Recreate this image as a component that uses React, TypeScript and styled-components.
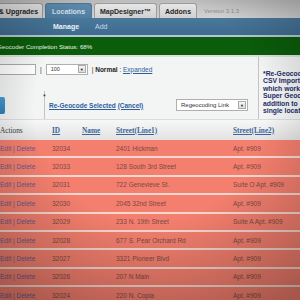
import React from "react";
import styled, { createGlobalStyle } from "styled-components";

const GlobalStyle = createGlobalStyle`
  body {
    margin: 0;
    background: #eef0f0;
    font-family: "Liberation Sans", Arial, sans-serif;
    overflow: hidden;
  }
`;

const Page = styled.div`
  position: relative;
  width: 300px;
  height: 300px;
  overflow: hidden;
  background: #f0f1f1;
  &::after {
    content: "";
    position: absolute;
    inset: 0;
    pointer-events: none;
    background: radial-gradient(
      ellipse 80% 78% at 50% 36%,
      rgba(0, 0, 0, 0) 48%,
      rgba(0, 0, 0, 0.32) 100%
    );
  }
`;

const TabBar = styled.div`
  height: 18px;
  display: flex;
  align-items: flex-end;
  gap: 2px;
  background: linear-gradient(#bcbcbc, #d2d2d2);
`;

const Tab = styled.div<{ $active?: boolean; $w: number }>`
  width: ${(p) => p.$w}px;
  height: 15px;
  box-sizing: border-box;
  display: flex;
  align-items: center;
  justify-content: center;
  border: 1px solid ${(p) => (p.$active ? "#4b7798" : "#9c9c9c")};
  border-bottom: none;
  border-radius: 3px 3px 0 0;
  background: ${(p) =>
    p.$active
      ? "linear-gradient(#5f8cae, #4f7ea2)"
      : "linear-gradient(#e6e6e6, #d0d0d0)"};
  color: ${(p) => (p.$active ? "#d6e2ec" : "#262626")};
  font-size: 7px;
  font-weight: bold;
  white-space: nowrap;
  &:first-child {
    margin-left: -6px;
  }
`;

const Version = styled.span`
  align-self: center;
  margin: 3px 0 0 5px;
  font-size: 6px;
  color: #8c8c8c;
`;

const SubNav = styled.div`
  height: 17px;
  display: flex;
  align-items: center;
  gap: 16px;
  padding-left: 53px;
  background: linear-gradient(#4a789b, #3e6b8f);
  border-bottom: 2px solid #b4c6d2;
`;

const SubLink = styled.span<{ $current?: boolean }>`
  font-size: 7px;
  font-weight: ${(p) => (p.$current ? "bold" : "normal")};
  color: ${(p) => (p.$current ? "#eef3f7" : "#cbdbe8")};
`;

const StatusBar = styled.div`
  height: 18px;
  display: flex;
  align-items: center;
  margin-left: -3px;
  background: #0b5c0b;
  border-bottom: 2px solid #d8e2d8;
  color: #eef4ee;
  font-size: 6.2px;
`;

const Controls = styled.div`
  height: 62px;
  display: grid;
  grid-template-columns: 258px 1fr;
  background: #f3f4f4;
`;

const ControlsMain = styled.div`
  display: flex;
  flex-direction: column;
`;

const FilterRow = styled.div`
  margin-top: 6px;
  height: 12px;
  display: flex;
  align-items: center;
  gap: 4px;
  font-size: 6.5px;
  color: #333;
`;

const TextInput = styled.div`
  width: 40px;
  height: 11px;
  margin-left: -4px;
  box-sizing: border-box;
  border: 1px solid #a9a9a9;
  background: #fff;
`;

const SelectBox = styled.div<{ $w: number }>`
  width: ${(p) => p.$w}px;
  height: 11px;
  box-sizing: border-box;
  display: flex;
  align-items: center;
  justify-content: space-between;
  padding: 0 1px 0 4px;
  border: 1px solid #b0b0b0;
  background: #fff;
  font-size: 5.5px;
  color: #333;
`;

const Arrow = styled.span`
  width: 6px;
  height: 6px;
  display: flex;
  align-items: center;
  justify-content: center;
  border: 1px solid #aaa;
  background: linear-gradient(#f6f6f6, #dcdcdc);
  font-size: 4px;
  color: #222;
`;

const Strong = styled.b`
  color: #222;
`;

const BlueLink = styled.span<{ $bold?: boolean }>`
  color: #2d5d9c;
  text-decoration: underline;
  font-weight: ${(p) => (p.$bold ? "bold" : "normal")};
`;

const ActionRow = styled.div`
  margin-top: auto;
  height: 28px;
  display: grid;
  grid-template-columns: 44px 1fr;
`;

const ButtonCell = styled.div`
  display: flex;
  align-items: center;
`;

const ApplyButton = styled.div`
  width: 14px;
  height: 17px;
  margin-left: -9px;
  border-radius: 2px;
  background: linear-gradient(#4a9ad0, #2f7fb8);
`;

const LinkCell = styled.div`
  position: relative;
  display: flex;
  align-items: center;
  padding-left: 4px;
  border-left: 1px solid #c2c2c2;
  font-size: 6.5px;
`;

const Star = styled.span`
  position: absolute;
  left: -2px;
  top: 2px;
  font-size: 7px;
  color: #222;
`;

const RightSelect = styled(SelectBox)`
  margin-left: auto;
  margin-right: 10px;
  height: 12px;
  font-size: 6px;
`;

const Note = styled.div`
  border-left: 1px solid #c4c4c4;
  padding: 13px 0 0 4px;
  font-size: 6.8px;
  line-height: 7.4px;
  font-weight: bold;
  color: #1e2c68;
  white-space: nowrap;
  overflow: hidden;
`;

const cols = "52px 30px 34px 117px 1fr";

const HeaderRow = styled.div`
  height: 20px;
  display: grid;
  grid-template-columns: ${cols};
  align-items: center;
  background: linear-gradient(#f7f7f7, #e3e3e3);
  border-top: 1px solid #dcdcdc;
  font-family: "Liberation Serif", "Times New Roman", serif;
  font-size: 7.3px;
  color: #3a3a3a;
`;

const HeadLink = styled.span`
  font-weight: bold;
  color: #3a6698;
  text-decoration: underline;
`;

const Row = styled.div`
  height: 16.4px;
  display: grid;
  grid-template-columns: ${cols};
  align-items: center;
  background: #f47f6e;
  border-bottom: 2px solid #f6d8d0;
  font-size: 6.5px;
  color: #764a44;
`;

const EditLinks = styled.span`
  color: #645a8c;
`;

const rows = [
  ["32034", "2401 Hickman", "Apt. #909"],
  ["32033", "128 South 3rd Street", "Apt. #909"],
  ["32031", "722 Genevieve St.", "Suite O Apt. #909"],
  ["32030", "2045 32nd Street", "Apt. #909"],
  ["32029", "233 N. 19th Street", "Suite A Apt. #909"],
  ["32028", "677 S. Pear Orchard Rd", "Apt. #909"],
  ["32027", "3321 Pioneer Blvd", "Apt. #909"],
  ["32026", "207 N Main", "Apt. #909"],
  ["32024", "220 N. Copia", "Apt. #909"],
];

export default function App(): JSX.Element {
  return (
    <Page>
      <GlobalStyle />
      <TabBar>
        <Tab $w={49}>&amp; Upgrades</Tab>
        <Tab $w={47} $active>
          Locations
        </Tab>
        <Tab $w={63}>MapDesigner™</Tab>
        <Tab $w={38}>Addons</Tab>
        <Version>Version 3.1.3</Version>
      </TabBar>
      <SubNav>
        <SubLink $current>Manage</SubLink>
        <SubLink>Add</SubLink>
      </SubNav>
      <StatusBar>Geocoder Completion Status: 68%</StatusBar>
      <Controls>
        <ControlsMain>
          <FilterRow>
            <TextInput />
            <span>|</span>
            <SelectBox $w={42}>
              100
              <Arrow>▼</Arrow>
            </SelectBox>
            <span>
              | <Strong>Normal</Strong> : <BlueLink>Expanded</BlueLink>
            </span>
          </FilterRow>
          <ActionRow>
            <ButtonCell>
              <ApplyButton />
            </ButtonCell>
            <LinkCell>
              <Star>*</Star>
              <span>
                <BlueLink $bold>Re-Geocode Selected</BlueLink>{" "}
                <BlueLink $bold>(Cancel)</BlueLink>
              </span>
              <RightSelect $w={72}>
                Regeocoding Link
                <Arrow>▼</Arrow>
              </RightSelect>
            </LinkCell>
          </ActionRow>
        </ControlsMain>
        <Note>
          *Re-Geocode
          <br />
          CSV Importer
          <br />
          which works
          <br />
          Super Geocoder
          <br />
          addition to
          <br />
          single location
        </Note>
      </Controls>
      <HeaderRow>
        <span>Actions</span>
        <HeadLink>ID</HeadLink>
        <HeadLink>Name</HeadLink>
        <HeadLink>Street(Line1)</HeadLink>
        <HeadLink>Street(Line2)</HeadLink>
      </HeaderRow>
      {rows.map(([id, street1, street2]) => (
        <Row key={id}>
          <EditLinks>Edit | Delete</EditLinks>
          <span>{id}</span>
          <span />
          <span>{street1}</span>
          <span>{street2}</span>
        </Row>
      ))}
    </Page>
  );
}
